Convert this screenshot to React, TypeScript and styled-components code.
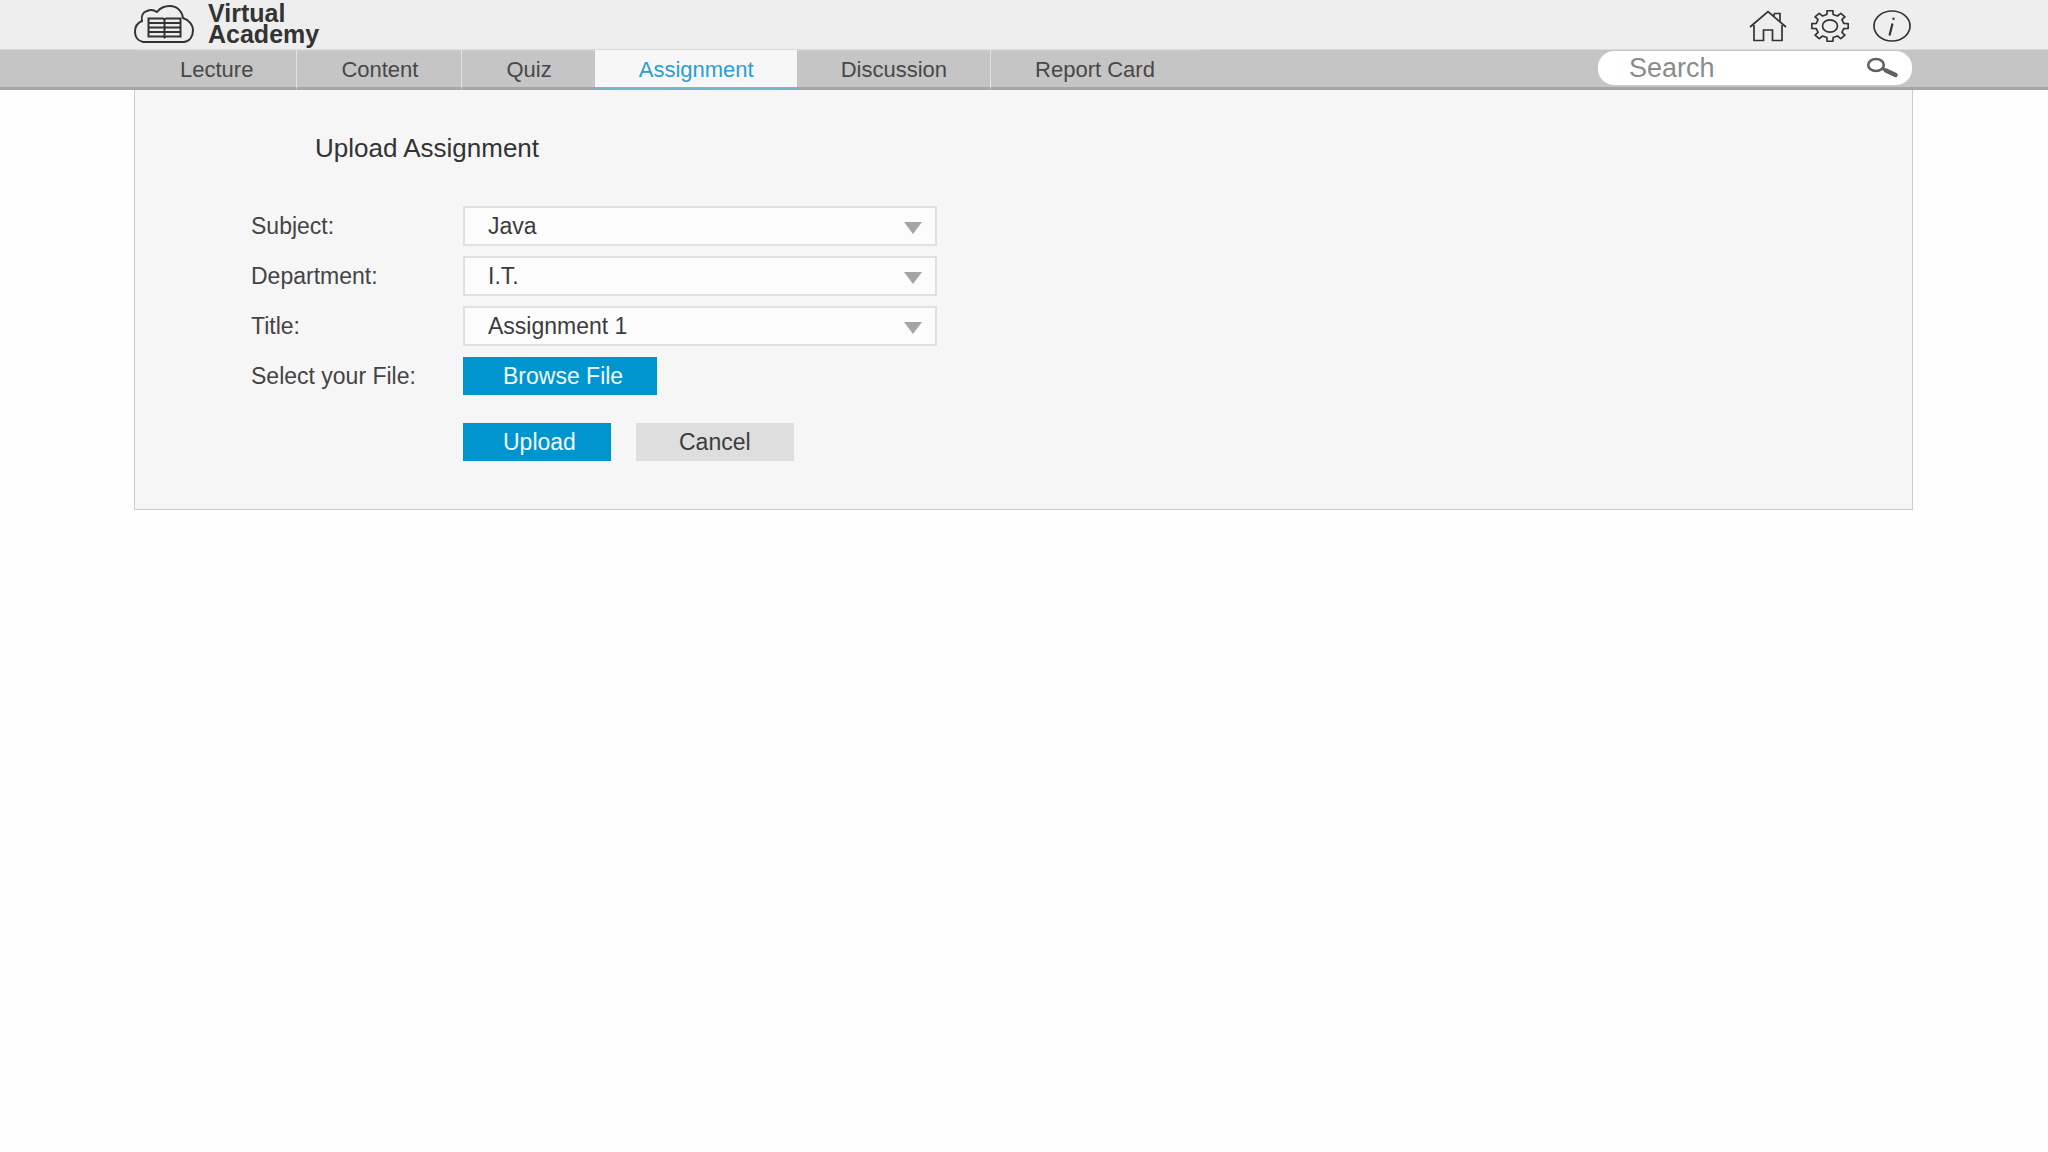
import React from "react";
import styled, { createGlobalStyle } from "styled-components";

const GlobalStyle = createGlobalStyle`
  *, *::before, *::after { box-sizing: border-box; }
  body {
    margin: 0;
    background: #fefefe;
    color: #3c3c3c;
    font-family: "Liberation Sans", Arial, sans-serif;
  }
  button, input, select { font-family: inherit; }
`;

const Header = styled.header`
  display: flex;
  align-items: center;
  justify-content: space-between;
  height: 50px;
  padding: 0 137px 0 134px;
  background: #eeeeee;
  border-bottom: 1px solid #dadada;
`;

const Brand = styled.a`
  display: flex;
  align-items: center;
  gap: 14px;
  padding-bottom: 2px;
  color: #333333;
  text-decoration: none;
`;

const BrandName = styled.span`
  width: min-content;
  font-size: 25px;
  font-weight: 700;
  line-height: 21px;
`;

const Actions = styled.div`
  display: flex;
  gap: 24px;
  padding-top: 3px;
`;

const IconLink = styled.a`
  display: flex;
  color: #333333;
`;

const NavBar = styled.nav`
  display: flex;
  align-items: stretch;
  justify-content: space-between;
  height: 40px;
  padding: 0 136px;
  background: #c5c5c5;
  box-shadow: inset 0 -3px 0 #a6a6a6;
`;

const Tabs = styled.div`
  display: flex;
`;

const Tab = styled.a<{ $active?: boolean; $divider?: boolean }>`
  display: flex;
  align-items: center;
  padding: 2px 43px 0 44px;
  border-right: ${(p) => (p.$divider ? "1px solid #e2e2e2" : "0")};
  border-bottom: 3px solid ${(p) => (p.$active ? "#73b9d3" : "#a6a6a6")};
  background: ${(p) => (p.$active ? "#f7f7f7" : "#c5c5c5")};
  box-shadow: inset 0 1px 0 ${(p) => (p.$active ? "#f7f7f7" : "#cecece")};
  color: ${(p) => (p.$active ? "#2a9fd0" : "#484848")};
  font-size: 22px;
  line-height: 24px;
  text-decoration: none;
`;

const SearchBox = styled.form`
  display: flex;
  align-items: center;
  width: 314px;
  height: 34px;
  margin-top: 1px;
  padding: 0 14px 0 31px;
  background: #ffffff;
  border-radius: 16px;
`;

const SearchInput = styled.input`
  flex: 1;
  min-width: 0;
  padding: 0;
  border: 0;
  outline: 0;
  background: transparent;
  color: #484848;
  font-size: 27px;
  line-height: 32px;
  &::placeholder { color: #8c8c8c; opacity: 1; }
`;

const SearchButton = styled.button`
  display: flex;
  padding: 0;
  border: 0;
  background: none;
  color: #606060;
  cursor: pointer;
`;

const Panel = styled.main`
  margin: 0 135px 0 134px;
  padding: 43px 116px 48px;
  background: #f7f6f7;
  border: 1px solid #cccccc;
  border-top: 0;
`;

const Heading = styled.h1`
  margin: 0 0 43px;
  padding-left: 64px;
  font-size: 26px;
  font-weight: 400;
  line-height: 30px;
  color: #333333;
`;

const Form = styled.form`
  display: flex;
  flex-direction: column;
  gap: 10px;
`;

const Row = styled.div`
  display: grid;
  grid-template-columns: 212px minmax(0, 474px);
  align-items: center;
  min-height: 40px;
`;

const Label = styled.label`
  font-size: 23px;
  line-height: 24px;
  padding-bottom: 1px;
  color: #444444;
`;

const SelectWrap = styled.div`
  position: relative;
  display: flex;
`;

const Select = styled.select`
  appearance: none;
  width: 100%;
  height: 40px;
  padding: 0 48px 0 23px;
  border: 2px solid #e2e1e2;
  border-radius: 0;
  background: #fdfcfd;
  color: #3c3c3c;
  font-size: 23px;
`;

const Arrow = styled.svg`
  position: absolute;
  right: 15px;
  top: 16px;
  pointer-events: none;
`;

const Buttons = styled.div`
  display: flex;
  gap: 25px;
  padding: 17px 0 0 212px;
`;

const Button = styled.button<{ $width: number; $muted?: boolean }>`
  width: ${(p) => p.$width}px;
  height: 38px;
  padding: 0 0 0 ${(p) => (p.$muted ? 43 : 40)}px;
  border: 0;
  background: ${(p) => (p.$muted ? "#dedede" : "#0095cf")};
  color: ${(p) => (p.$muted ? "#3c3c3c" : "#f0faff")};
  font-size: 23px;
  line-height: 38px;
  text-align: left;
  cursor: pointer;
`;

function CloudLogo() {
  return (
    <svg width="60" height="38" viewBox="0 0 60 38" fill="none" stroke="currentColor" aria-hidden="true">
      <path
        strokeWidth="2"
        d="M9 37C4 36 1 32 1 27C1 22 3 18 8 16C7 11 9 7 13 6C17 4 20 5 23 7C26 3 30 1 36 1C43 1 48 6 49 13C55 15 59 20 59 25C59 31 56 36 50 37Z"
      />
      <path strokeWidth="2" d="M14.5 13.5H29L30.5 14.5L32 13.5H46.5V31.5H32L30.5 32.5L29 31.5H14.5Z" />
      <path strokeWidth="2" d="M30.5 14V32" />
      <path strokeWidth="1.8" d="M15 18H46M15 22.5H46M15 27H46" />
    </svg>
  );
}

function HomeIcon() {
  return (
    <svg width="38" height="32" viewBox="0 0 38 32" fill="none" stroke="currentColor" strokeWidth="1.7" aria-hidden="true">
      <path d="M1 17L19 1.5L37 17" />
      <path d="M5 15V30.5H14.5V20H23.5V30.5H33V15" />
      <path d="M25 3.5H31V11.5M25 3.5V6" />
    </svg>
  );
}

const gearPoints = Array.from({ length: 8 }, (_, k) => k * 45)
  .flatMap((deg) => [
    [deg - 13, 0.74],
    [deg - 9, 0.97],
    [deg + 9, 0.97],
    [deg + 13, 0.74],
  ])
  .map(([deg, r]) => {
    const a = (deg * Math.PI) / 180;
    return `${(19 + 19 * r * Math.cos(a)).toFixed(2)},${(16 + 16 * r * Math.sin(a)).toFixed(2)}`;
  })
  .join(" ");

function GearIcon() {
  return (
    <svg width="38" height="32" viewBox="0 0 38 32" fill="none" stroke="currentColor" strokeWidth="1.7" aria-hidden="true">
      <polygon points={gearPoints} strokeLinejoin="round" />
      <ellipse cx="19" cy="16" rx="7.5" ry="6.2" />
    </svg>
  );
}

function InfoIcon() {
  return (
    <svg width="38" height="32" viewBox="0 0 38 32" fill="none" stroke="currentColor" strokeWidth="1.7" aria-hidden="true">
      <ellipse cx="19" cy="16" rx="18" ry="15" />
      <line x1="19.5" y1="13.5" x2="16.5" y2="25.5" strokeWidth="2.2" />
      <circle cx="20.5" cy="8.8" r="1.2" fill="currentColor" stroke="none" />
    </svg>
  );
}

function SearchIcon() {
  return (
    <svg width="32" height="22" viewBox="0 0 32 22" fill="none" stroke="currentColor" aria-hidden="true">
      <ellipse cx="10" cy="8" rx="7.8" ry="6" strokeWidth="2.6" />
      <path d="M16.5 11.5L21 14" strokeWidth="2.6" />
      <path d="M20 13.5L29.5 18" strokeWidth="4.4" strokeLinecap="round" />
    </svg>
  );
}

const tabs = [
  { name: "Lecture", divider: true },
  { name: "Content", divider: true },
  { name: "Quiz" },
  { name: "Assignment", active: true },
  { name: "Discussion", divider: true },
  { name: "Report Card" },
];

const fields = [
  { id: "subject", label: "Subject:", value: "Java" },
  { id: "department", label: "Department:", value: "I.T." },
  { id: "title", label: "Title:", value: "Assignment 1" },
];

export default function App() {
  return (
    <>
      <GlobalStyle />
      <Header>
        <Brand href="#">
          <CloudLogo />
          <BrandName>Virtual Academy</BrandName>
        </Brand>
        <Actions>
          <IconLink href="#home" aria-label="Home"><HomeIcon /></IconLink>
          <IconLink href="#settings" aria-label="Settings"><GearIcon /></IconLink>
          <IconLink href="#info" aria-label="Information"><InfoIcon /></IconLink>
        </Actions>
      </Header>
      <NavBar>
        <Tabs>
          {tabs.map((t) => (
            <Tab
              key={t.name}
              href="#"
              $active={t.active}
              $divider={t.divider}
              aria-current={t.active ? "page" : undefined}
            >
              {t.name}
            </Tab>
          ))}
        </Tabs>
        <SearchBox role="search" onSubmit={(e) => e.preventDefault()}>
          <SearchInput type="text" placeholder="Search" aria-label="Search" />
          <SearchButton type="submit" aria-label="Search"><SearchIcon /></SearchButton>
        </SearchBox>
      </NavBar>
      <Panel>
        <Heading>Upload Assignment</Heading>
        <Form onSubmit={(e) => e.preventDefault()}>
          {fields.map((f) => (
            <Row key={f.id}>
              <Label htmlFor={f.id}>{f.label}</Label>
              <SelectWrap>
                <Select id={f.id} defaultValue={f.value}>
                  <option>{f.value}</option>
                </Select>
                <Arrow width="18" height="12" viewBox="0 0 18 12" aria-hidden="true">
                  <path d="M0 0H18L9 12Z" fill="#a6a5a6" />
                </Arrow>
              </SelectWrap>
            </Row>
          ))}
          <Row>
            <Label htmlFor="file">Select your File:</Label>
            <Button id="file" type="button" $width={194}>Browse File</Button>
          </Row>
          <Buttons>
            <Button type="submit" $width={148}>Upload</Button>
            <Button type="button" $width={158} $muted>Cancel</Button>
          </Buttons>
        </Form>
      </Panel>
    </>
  );
}
